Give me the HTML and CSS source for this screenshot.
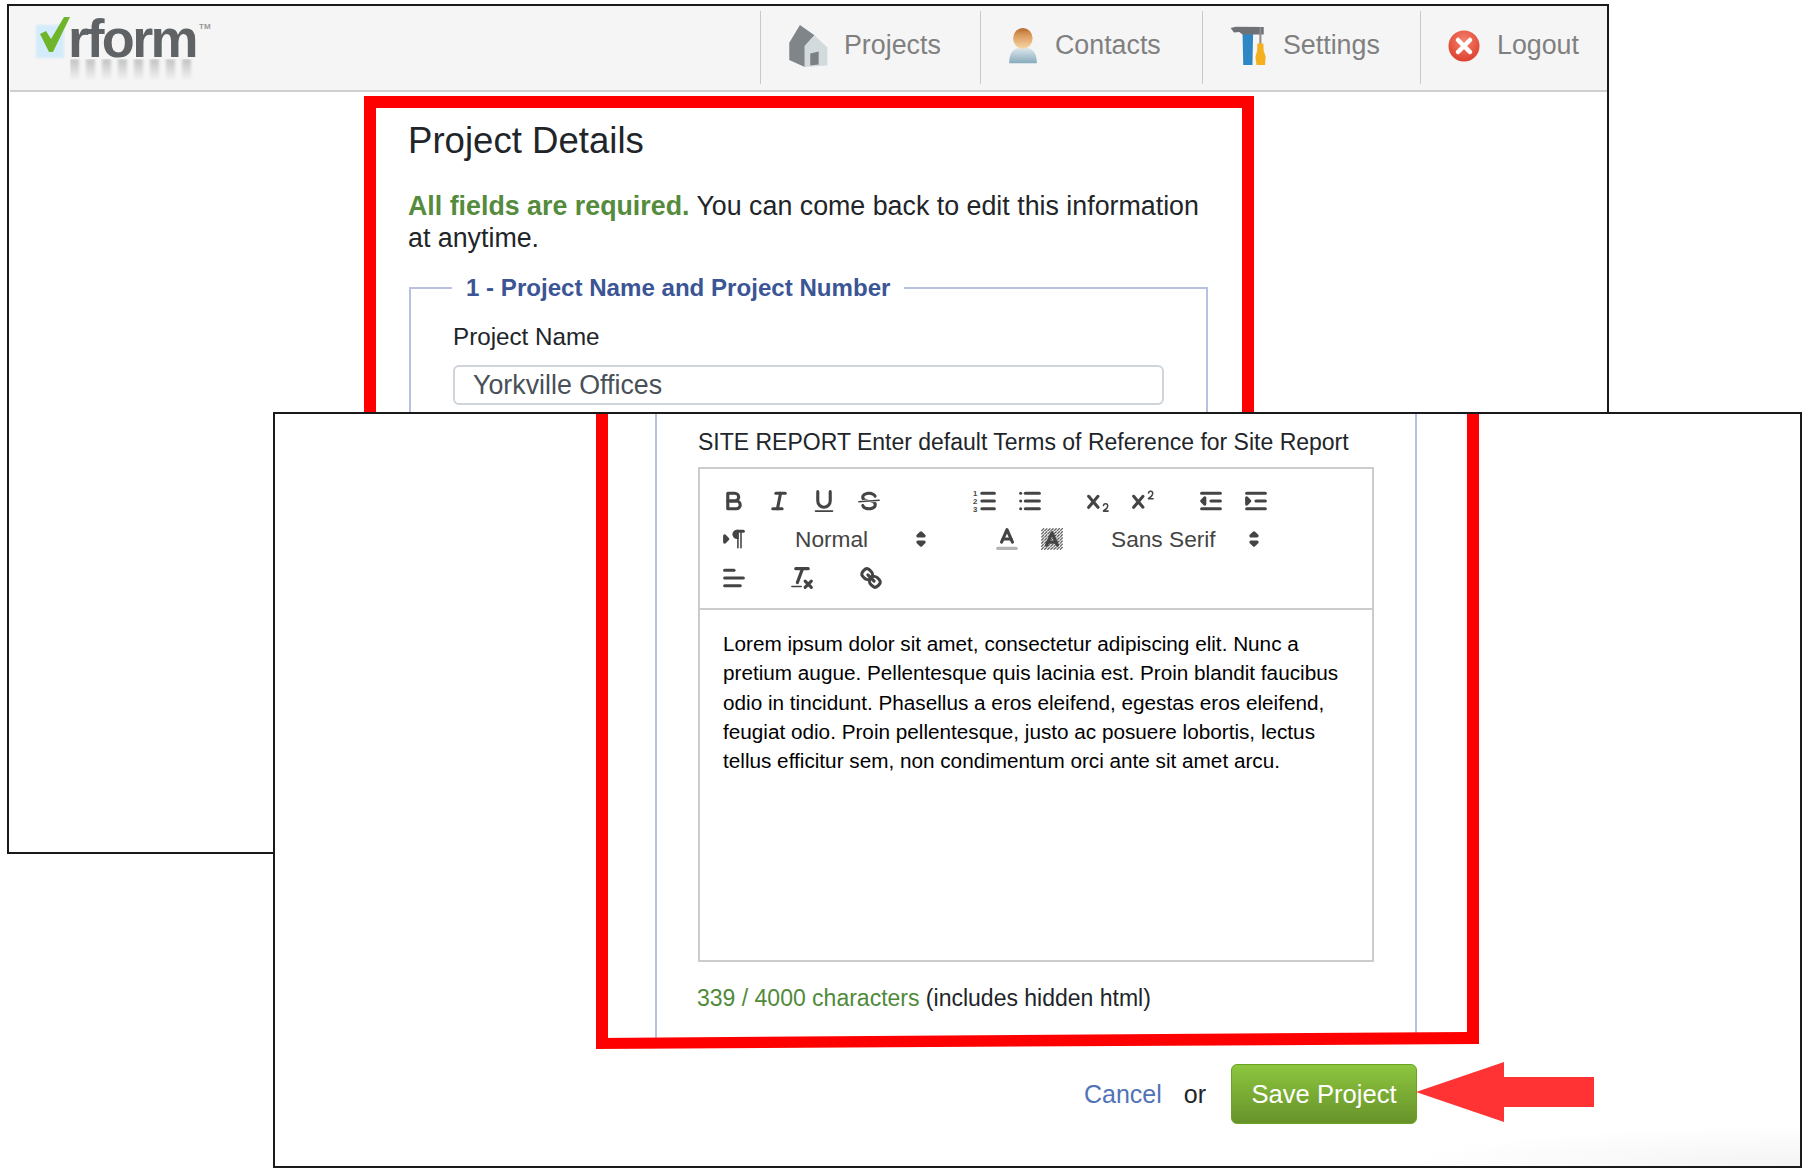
FILE: index.html
```html
<!DOCTYPE html>
<html lang="en">
  <head>
    <meta charset="UTF-8" />
    <meta name="viewport" content="width=device-width, initial-scale=1.0" />
    <title>Project Details</title>
    <link rel="stylesheet" href="styles.css">
  </head>
  <body>
    <!-- first screenshot: top of the form -->
    <section class="window window-top">
      <header class="navbar">
        <div class="logo">
          <span class="logo-box"></span>
          <svg class="logo-check" viewBox="0 0 32 36"><polygon points="2,17 8,14 13,22 26,0 32,0 15,35 11,35" fill="#6fb52c" /></svg>
          <span class="logo-text">rform</span>
          <span class="logo-mirror"></span>
          <span class="logo-tm">TM</span>
        </div>
        <nav class="nav-items">
          <a class="nav-item nav-projects">
            <svg class="nav-icon icon-house" viewBox="50 25 130 140">
              <polygon points="57,85 90,30 135,62 105,95 105,160 57,138" fill="#7f8589" />
              <polygon points="105,95 135,62 175,100 175,155 105,160" fill="#d3dade" />
              <polygon points="122,118 148,112 148,152 122,155" fill="#7a8084" />
            </svg>
            Projects
          </a>
          <a class="nav-item nav-contacts">
            <svg class="nav-icon icon-person" viewBox="710 30 105 130">
              <defs>
                <linearGradient id="skin" x1="0" y1="0" x2="0" y2="1"><stop offset="0" stop-color="#b9692c" /><stop offset=".35" stop-color="#d99a5c" /><stop offset="1" stop-color="#f7d7a8" /></linearGradient>
                <linearGradient id="shirt" x1="0" y1="0" x2="0" y2="1"><stop offset="0" stop-color="#dfe9ee" /><stop offset="1" stop-color="#86aabb" /></linearGradient>
              </defs>
              <path d="M717 152 C717 118 730 100 762 100 C795 100 808 118 808 152 Z" fill="url(#shirt)" />
              <ellipse cx="762" cy="70" rx="32" ry="34" fill="url(#skin)" />
            </svg>
            Contacts
          </a>
          <a class="nav-item nav-settings">
            <svg class="nav-icon icon-tools" viewBox="55 30 115 125">
              <path d="M96 55 L128 55 L126 150 L98 150 Z" fill="#2f86c5" />
              <path d="M60 38 L75 34 L160 35 L160 58 L96 58 L86 50 L70 52 Z" fill="#6e7276" />
              <rect x="147" y="35" width="6" height="52" fill="#8c8c8c" />
              <path d="M141 85 L159 85 L160 108 L166 125 L164 150 L138 150 L135 125 L140 108 Z" fill="#f5b01f" />
            </svg>
            Settings
          </a>
          <a class="nav-item nav-logout">
            <svg class="nav-icon icon-close" viewBox="0 0 32 32">
              <defs>
                <radialGradient id="red" cx=".5" cy=".35" r=".7"><stop offset="0" stop-color="#f4856f" /><stop offset="1" stop-color="#dc3a28" /></radialGradient>
              </defs>
              <circle cx="16" cy="16" r="15.5" fill="url(#red)" />
              <path d="M10 10 L22 22 M22 10 L10 22" stroke="#fff" stroke-width="4.5" stroke-linecap="round" />
            </svg>
            Logout
          </a>
        </nav>
      </header>

      <div class="frame frame-top">
        <h1 class="titulo">Project Details</h1>
        <p class="intro"><strong>All fields are required.</strong> You can come back to edit this information at anytime.</p>
        <fieldset class="campos">
          <legend>1 - Project Name and Project Number</legend>
          <label class="campo-label" for="project-name">Project Name</label>
          <input class="campo-input" id="project-name" type="text" value="Yorkville Offices" />
        </fieldset>
      </div>
    </section>

    <!-- second screenshot: bottom of the form -->
    <section class="window window-bottom">
      <div class="frame frame-bottom">
        <div class="section">
          <div class="site-label">SITE REPORT Enter default Terms of Reference for Site Report</div>
          <div class="editor">
            <div class="toolbar">
              <div class="tool-row">
                <div class="tool-group">
                  <span class="tool"><svg viewBox="0 0 18 18"><path class="st" d="M5,4H9.5A2.5,2.5,0,0,1,12,6.5v0A2.5,2.5,0,0,1,9.5,9H5A0,0,0,0,1,5,9V4A0,0,0,0,1,5,4Z" /><path class="st" d="M5,9h5.5A2.5,2.5,0,0,1,13,11.5v0A2.5,2.5,0,0,1,10.5,14H5a0,0,0,0,1,0,0V9A0,0,0,0,1,5,9Z" /></svg></span>
                  <span class="tool"><svg viewBox="0 0 18 18"><line class="st" x1="7" x2="13" y1="4" y2="4" /><line class="st" x1="5" x2="11" y1="14" y2="14" /><line class="st" x1="8" x2="10" y1="14" y2="4" /></svg></span>
                  <span class="tool"><svg viewBox="0 0 18 18"><path class="st" d="M5,3V9a4.012,4.012,0,0,0,4,4H9a4.012,4.012,0,0,0,4-4V3" /><rect class="fl" height="1" rx=".5" ry=".5" width="12" x="3" y="15" /></svg></span>
                  <span class="tool"><svg viewBox="0 0 18 18"><line class="st thin" x1="15.5" x2="2.5" y1="8.5" y2="9.5" /><path class="fl" d="M9.007,8C6.542,7.791,6,7.519,6,6.5,6,5.792,7.283,5,9,5c1.571,0,2.765.679,2.969,1.309a1,1,0,0,0,1.9-.617C13.356,4.106,11.354,3,9,3,6.2,3,4,4.538,4,6.5a3.2,3.2,0,0,0,.5,1.843Z" /><path class="fl" d="M8.984,10C11.457,10.208,12,10.479,12,11.5c0,.708-1.283,1.5-3,1.5-1.571,0-2.765-.679-2.969-1.309a1,1,0,1,0-1.9.617C4.644,13.894,6.646,15,9,15c2.8,0,5-1.538,5-3.5a3.2,3.2,0,0,0-.5-1.843Z" /></svg></span>
                </div>
                <div class="tool-group group-lists">
                  <span class="tool"><svg viewBox="0 0 18 18"><line class="st" x1="7" x2="15" y1="4" y2="4" /><line class="st" x1="7" x2="15" y1="9" y2="9" /><line class="st" x1="7" x2="15" y1="14" y2="14" /><text class="num" x="2.6" y="5.8">1</text><text class="num" x="2.6" y="10.8">2</text><text class="num" x="2.6" y="15.8">3</text></svg></span>
                  <span class="tool"><svg viewBox="0 0 18 18"><line class="st" x1="6" x2="15" y1="4" y2="4" /><line class="st" x1="6" x2="15" y1="9" y2="9" /><line class="st" x1="6" x2="15" y1="14" y2="14" /><line class="st" x1="3" x2="3" y1="4" y2="4" /><line class="st" x1="3" x2="3" y1="9" y2="9" /><line class="st" x1="3" x2="3" y1="14" y2="14" /></svg></span>
                </div>
                <div class="tool-group group-scripts">
                  <span class="tool"><svg viewBox="0 0 18 18"><path class="fl" d="M15.5,15H13.861a3.858,3.858,0,0,0,1.914-2.975,1.8,1.8,0,0,0-1.6-1.751A1.921,1.921,0,0,0,12.021,11.7a0.50013,0.50013,0,1,0,.957.291h0a0.914,0.914,0,0,1,1.053-.725,0.81,0.81,0,0,1,.744.762c0,1.076-1.16971,1.86982-1.93971,2.43082A1.45639,1.45639,0,0,0,12,15.5a0.5,0.5,0,0,0,.5.5h3A0.5,0.5,0,0,0,15.5,15Z" /><path class="fl" d="M9.65,5.241a1,1,0,0,0-1.409.108L6,7.964,3.759,5.349A1,1,0,0,0,2.192,6.59178Q2.21541,6.6213,2.241,6.649L4.684,9.5,2.241,12.35A1,1,0,0,0,3.71,13.70722q0.02557-.02768.049-0.05722L6,11.036,8.241,13.65a1,1,0,1,0,1.567-1.24277Q9.78459,12.3777,9.759,12.35L7.316,9.5,9.759,6.651A1,1,0,0,0,9.65,5.241Z" /></svg></span>
                  <span class="tool"><svg viewBox="0 0 18 18"><path class="fl" d="M15.5,7H13.861a4.015,4.015,0,0,0,1.914-2.975,1.8,1.8,0,0,0-1.6-1.751A1.922,1.922,0,0,0,12.021,3.7a0.5,0.5,0,1,0,.957.291,0.917,0.917,0,0,1,1.053-.725,0.81,0.81,0,0,1,.744.762c0,1.077-1.164,1.925-1.934,2.486A1.423,1.423,0,0,0,12,7.5a0.5,0.5,0,0,0,.5.5h3A0.5,0.5,0,0,0,15.5,7Z" /><path class="fl" d="M9.651,5.241a1,1,0,0,0-1.41.108L6,7.964,3.759,5.349a1,1,0,1,0-1.519,1.3L4.683,9.5,2.241,12.35a1,1,0,1,0,1.519,1.3L6,11.036,8.241,13.65a1,1,0,0,0,1.519-1.3L7.317,9.5,9.759,6.651A1,1,0,0,0,9.651,5.241Z" /></svg></span>
                </div>
                <div class="tool-group group-indent">
                  <span class="tool"><svg viewBox="0 0 18 18"><line class="st" x1="3" x2="15" y1="14" y2="14" /><line class="st" x1="3" x2="15" y1="4" y2="4" /><line class="st" x1="9" x2="15" y1="9" y2="9" /><polyline class="st fl" points="5 7 5 11 3 9 5 7" /></svg></span>
                  <span class="tool"><svg viewBox="0 0 18 18"><line class="st" x1="3" x2="15" y1="14" y2="14" /><line class="st" x1="3" x2="15" y1="4" y2="4" /><line class="st" x1="9" x2="15" y1="9" y2="9" /><polyline class="st fl" points="3 7 3 11 5 9 3 7" /></svg></span>
                </div>
              </div>
              <div class="tool-row">
                <span class="tool"><svg viewBox="0 0 18 18"><polygon class="st fl" points="3 11 5 9 3 7 3 11" /><line class="st" x1="15" x2="11" y1="4" y2="4" /><path class="fl" d="M11,3a3,3,0,0,0,0,6h1V3H11Z" /><rect class="fl" height="11" width="1" x="11" y="4" /><rect class="fl" height="11" width="1" x="13" y="4" /></svg></span>
                <div class="picker picker-header">
                  <span>Normal</span>
                  <svg viewBox="0 0 18 18"><polygon class="st fl" points="7 11 9 13 11 11 7 11" /><polygon class="st fl" points="7 7 9 5 11 7 7 7" /></svg>
                </div>
                <div class="tool-group group-color">
                  <span class="tool"><svg viewBox="0 0 18 18"><line class="st label-line" x1="3" x2="15" y1="15" y2="15" /><polyline class="st" points="5.5 11 9 3 12.5 11" /><line class="st" x1="11.63" x2="6.38" y1="9" y2="9" /></svg></span>
                  <span class="tool"><svg viewBox="0 0 18 18"><defs><pattern id="hatch" width="2" height="2" patternUnits="userSpaceOnUse"><path d="M0 2 L2 0" stroke="#444" stroke-width=".7" /></pattern></defs><rect x="2" y="2" width="14" height="14" fill="url(#hatch)" /><polyline class="st" points="5.5 13 9 5 12.5 13" /><line class="st" x1="11.63" x2="6.38" y1="11" y2="11" /></svg></span>
                </div>
                <div class="picker picker-font">
                  <span>Sans Serif</span>
                  <svg viewBox="0 0 18 18"><polygon class="st fl" points="7 11 9 13 11 11 7 11" /><polygon class="st fl" points="7 7 9 5 11 7 7 7" /></svg>
                </div>
              </div>
              <div class="tool-row">
                <span class="tool"><svg viewBox="0 0 18 18"><line class="st" x1="3" x2="15" y1="9" y2="9" /><line class="st" x1="3" x2="13" y1="14" y2="14" /><line class="st" x1="3" x2="9" y1="4" y2="4" /></svg></span>
                <div class="tool-group group-clean">
                  <span class="tool"><svg viewBox="0 0 18 18"><line class="st" x1="5" x2="13" y1="3" y2="3" /><line class="st" x1="6" x2="9.35" y1="12" y2="3" /><line class="st" x1="11" x2="15" y1="11" y2="15" /><line class="st" x1="15" x2="11" y1="11" y2="15" /><rect class="fl" height="1" rx="0.5" ry="0.5" width="7" x="2" y="14" /></svg></span>
                  <span class="tool tool-link"><svg viewBox="0 0 18 18"><line class="st" x1="7" x2="11" y1="7" y2="11" /><path class="st" d="M8.9,4.577a3.476,3.476,0,0,1,.36,4.679A3.476,3.476,0,0,1,4.577,8.9C3.185,7.5,2.035,6.4,4.217,4.217S7.5,3.185,8.9,4.577Z" /><path class="st" d="M13.423,9.1a3.476,3.476,0,0,0-4.679-.36,3.476,3.476,0,0,0,.36,4.679c1.392,1.392,2.5,2.542,4.679.36S14.815,10.5,13.423,9.1Z" /></svg></span>
                </div>
              </div>
            </div>
            <div class="editor-text">Lorem ipsum dolor sit amet, consectetur adipiscing elit. Nunc a pretium augue. Pellentesque quis lacinia est. Proin blandit faucibus odio in tincidunt. Phasellus a eros eleifend, egestas eros eleifend, feugiat odio. Proin pellentesque, justo ac posuere lobortis, lectus tellus efficitur sem, non condimentum orci ante sit amet arcu.</div>
          </div>
          <div class="contador"><span class="contador-num">339 / 4000 characters</span> (includes hidden html)</div>
        </div>
      </div>
      <div class="acoes">
        <a class="cancelar">Cancel</a>
        <span class="ou">or</span>
        <button class="btn-salvar">Save Project</button>
      </div>
    </section>

    <!-- red markup drawn over the screenshots -->
    <svg class="marcas" viewBox="0 0 1808 1174">
      <polygon points="596,1038 1468,1032 1479,1032 1479,1044 596,1049" fill="#ff0000" />
      <polygon points="1416,1092 1504,1062 1504,1077 1594,1077 1594,1107 1504,1107 1504,1122" fill="#ff3333" />
    </svg>
  </body>
</html>
```
FILE: styles.css
```css
body,
html {
  margin: 0;
  padding: 0;
  font-family: "Liberation Sans", Arial, sans-serif;
  background-color: white;
  height: 100%;
  color: #212529;
}

.window {
  position: absolute;
  box-sizing: border-box;
  border: 2px solid #1a1a1a;
  background-color: white;
  overflow: hidden;
}

.window-top {
  left: 7px;
  top: 4px;
  width: 1602px;
  height: 850px;
}

.window-bottom {
  left: 273px;
  top: 412px;
  width: 1529px;
  height: 756px;
  background: radial-gradient(ellipse 400px 40px at 100% 100%, #f3f3f3, white);
}

/* navbar */
.navbar {
  display: flex;
  justify-content: space-between;
  height: 84px;
  margin-left: 1px;
  background-color: #f5f5f5;
  border-bottom: 2px solid #cfcfcf;
}

.logo {
  position: relative;
  width: 200px;
}

.logo-box {
  position: absolute;
  left: 26px;
  top: 19px;
  width: 28px;
  height: 33px;
  background-color: #d3ebfa;
  filter: blur(1px);
}

.logo-check {
  position: absolute;
  left: 28px;
  top: 11px;
  width: 32px;
  height: 36px;
  filter: blur(0.4px);
}

.logo-text {
  position: absolute;
  left: 58px;
  top: 1px;
  font-size: 54px;
  line-height: 62px;
  font-weight: bold;
  letter-spacing: -2.6px;
  color: #606365;
  filter: blur(0.6px);
}

.logo-mirror {
  position: absolute;
  left: 60px;
  top: 53px;
  width: 128px;
  height: 22px;
  background: repeating-linear-gradient(90deg, rgba(96, 99, 101, 0.35) 0 9px, transparent 9px 16px);
  -webkit-mask-image: linear-gradient(black, transparent);
  mask-image: linear-gradient(black, transparent);
  filter: blur(1.5px);
}

.logo-tm {
  position: absolute;
  left: 189px;
  top: 16px;
  font-size: 8px;
  font-weight: bold;
  color: #999;
}

.nav-items {
  display: flex;
}

.nav-item {
  display: flex;
  align-items: center;
  box-sizing: border-box;
  height: 73px;
  margin-top: 5px;
  padding: 0 0 4px 26px;
  gap: 16px;
  border-left: 1px solid #c9c9c9;
  color: #808080;
  font-size: 26.8px;
}

.nav-projects {
  width: 220px;
  gap: 15px;
}

.nav-contacts {
  width: 222px;
}

.nav-settings {
  width: 218px;
}

.nav-logout {
  width: 187px;
  padding-left: 27px;
  gap: 17px;
}

.nav-icon {
  flex: none;
}

.icon-house {
  width: 42px;
  height: 46px;
}

.icon-person {
  width: 32px;
  height: 42px;
}

.icon-tools {
  width: 38px;
  height: 42px;
}

.icon-close {
  width: 32px;
  height: 32px;
}

/* red frames */
.frame {
  box-sizing: border-box;
  border: 12px solid #ff0000;
}

.frame-top {
  width: 890px;
  margin: 4px 0 0 355px;
  height: 800px;
  padding: 0 32px;
}

.titulo {
  margin: 0;
  padding-top: 10.7px;
  font-size: 36.6px;
  line-height: 44px;
  font-weight: normal;
}

.intro {
  margin: 27.6px 0 0;
  font-size: 26.8px;
  line-height: 32px;
}

.intro strong {
  color: #558b3c;
}

.campos {
  box-sizing: border-box;
  width: 799px;
  height: 500px;
  margin: 20px 0 0 1px;
  padding: 21px 42px 0;
  border: 2px solid #b7c1e2;
}

legend {
  margin-left: -1px;
  padding: 0 14px;
  font-size: 24.1px;
  font-weight: bold;
  color: #3b5595;
}

.campo-label {
  display: block;
  font-size: 24.2px;
  line-height: 28px;
}

.campo-input {
  display: block;
  box-sizing: border-box;
  width: 711px;
  height: 40px;
  margin-top: 14px;
  padding: 0 18px;
  font-family: inherit;
  font-size: 26.8px;
  color: #495057;
  border: 2px solid #ced4da;
  border-radius: 6px;
  background-color: white;
}

.frame-bottom {
  width: 883px;
  height: 625px;
  margin-left: 321px;
  border-width: 0 12px;
}

.section {
  box-sizing: border-box;
  width: 762px;
  height: 100%;
  margin-left: 47px;
  padding: 0 41px;
  border-left: 2px solid #b7c1e2;
  border-right: 2px solid #b7c1e2;
}

.site-label {
  padding-top: 14px;
  font-size: 23px;
  line-height: 28px;
  white-space: nowrap;
}

.editor {
  box-sizing: border-box;
  width: 676px;
  height: 495px;
  margin-top: 11px;
  border: 2px solid #ccc;
}

.toolbar {
  box-sizing: border-box;
  height: 141px;
  padding: 12.3px 11px 0;
  border-bottom: 2px solid #ccc;
}

.tool-row {
  display: flex;
  height: 38.6px;
}

.tool-group {
  display: flex;
}

.group-lists {
  margin-left: 71px;
}

.group-scripts,
.group-indent {
  margin-left: 23px;
}

.group-color {
  margin-left: 49px;
}

.group-clean {
  margin-left: 23px;
}

.tool-link {
  margin-left: 24px;
}

.tool {
  display: flex;
  align-items: center;
  justify-content: center;
  width: 45px;
  height: 38.6px;
}

.tool svg {
  width: 28px;
  height: 28px;
}

.picker {
  display: flex;
  align-items: center;
  justify-content: space-between;
  box-sizing: border-box;
  margin-left: 23px;
  font-size: 22.7px;
  color: #444;
}

.picker svg {
  width: 28px;
  height: 28px;
}

.picker-header {
  width: 156px;
  padding-left: 16px;
}

.picker-font {
  width: 177px;
  margin-left: 23px;
  padding: 0 6px 0 14px;
}

.st {
  fill: none;
  stroke: #444;
  stroke-width: 2;
  stroke-linecap: round;
  stroke-linejoin: round;
}

.fl {
  fill: #444;
}

.st.fl {
  fill: #444;
}

.st.thin {
  stroke-width: 1;
}

.st.label-line {
  stroke: #b5b5b5;
}

.num {
  font-family: "Liberation Sans", Arial, sans-serif;
  font-size: 5px;
  font-weight: bold;
  fill: #444;
  text-anchor: middle;
}

.editor-text {
  padding: 19px 22px 0 23px;
  font-size: 20.72px;
  line-height: 29.3px;
  color: black;
}

.contador {
  margin-top: 22px;
  margin-left: -1px;
  font-size: 23px;
  line-height: 28px;
}

.contador-num {
  color: #4f8a3a;
}

/* footer */
.acoes {
  display: flex;
  align-items: center;
  gap: 22px;
  width: 1142px;
  justify-content: flex-end;
  margin-top: 25px;
  font-size: 25px;
}

.cancelar {
  color: #5273b5;
}

.btn-salvar {
  width: 186px;
  height: 60px;
  padding: 0;
  margin-left: 3px;
  font-family: inherit;
  font-size: 25.6px;
  color: white;
  border: 1px solid #6aa322;
  border-radius: 6px;
  background: linear-gradient(#8dc63f, #67922a);
}

.marcas {
  position: absolute;
  left: 0;
  top: 0;
  width: 1808px;
  height: 1174px;
  pointer-events: none;
}
```
